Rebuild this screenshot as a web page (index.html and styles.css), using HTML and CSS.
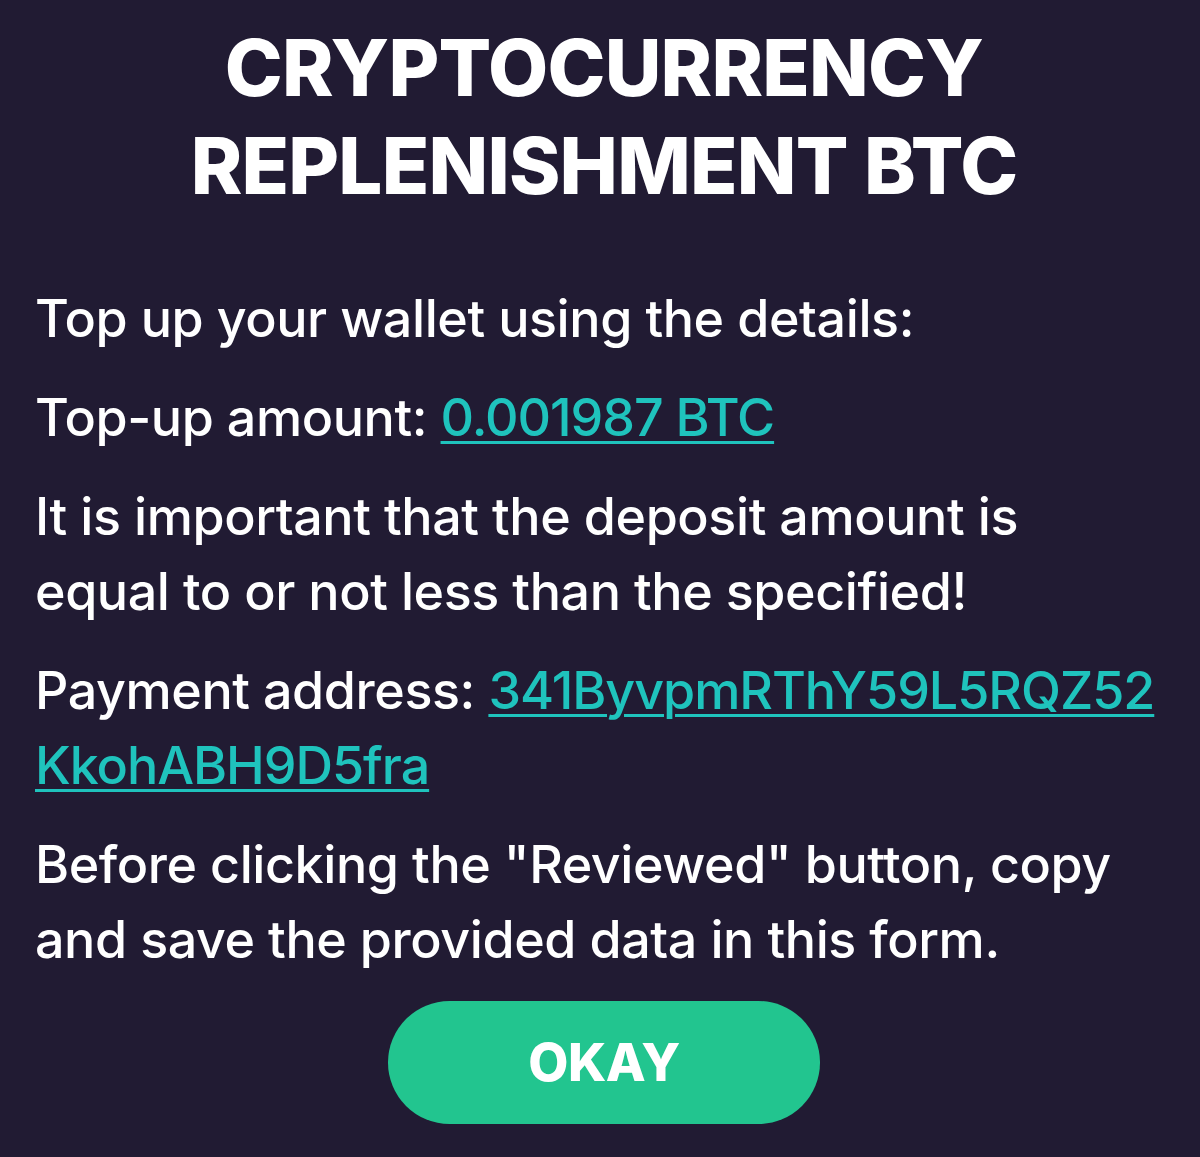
FILE: index.html
```html
<!DOCTYPE html>
<html lang="en">
<head>
<meta charset="utf-8">
<title>Cryptocurrency replenishment BTC</title>
<link rel="stylesheet" href="styles.css">
</head>
<body>
<div class="modal">
  <h1 class="modal-title">CRYPTOCURRENCY<br>REPLENISHMENT BTC</h1>
  <div class="modal-body">
    <p>Top up your wallet using the details:</p>
    <p>Top-up amount: <a class="link" href="#">0.001987 BTC</a></p>
    <p>It is important that the deposit amount is equal to or not less than the specified!</p>
    <p>Payment address: <a class="link" href="#">341ByvpmRThY59L5RQZ52 KkohABH9D5fra</a></p>
    <p>Before clicking the "Reviewed" button, copy and save the provided data in this form.</p>
  </div>
  <div class="modal-actions">
    <button class="btn-okay" type="button">OKAY</button>
  </div>
</div>
</body>
</html>
```

FILE: styles.css
```css
html, body {
  margin: 0;
  padding: 0;
  background: #211b33;
}

body {
  font-family: Inter, "Noto Sans", sans-serif;
  color: #ffffff;
}

.modal {
  width: 1200px;
  height: 1157px;
  box-sizing: border-box;
  padding: 19px 27px 0 35px;
  display: flex;
  flex-direction: column;
}

.modal-title {
  margin: 0;
  text-align: center;
  font-size: 78px;
  line-height: 98px;
  font-weight: 800;
  letter-spacing: -0.01em;
}

.modal-body {
  margin-top: 66px;
  margin-right: 15px;
}

.modal-body p {
  margin: 0 0 24px 0;
  font-size: 52px;
  line-height: 75px;
  font-weight: 500;
  letter-spacing: -0.008em;
}

.link {
  color: #1fc3bd;
  letter-spacing: -0.02em;
  text-decoration: underline;
  text-decoration-thickness: 3px;
  text-underline-offset: 5px;
}

.modal-actions {
  display: flex;
  justify-content: center;
}

.btn-okay {
  width: 432px;
  height: 123px;
  border: none;
  border-radius: 62px;
  background: #22c58f;
  color: #ffffff;
  font-family: Inter, "Noto Sans", sans-serif;
  font-size: 52px;
  font-weight: 800;
  letter-spacing: -0.01em;
  cursor: pointer;
}
```
